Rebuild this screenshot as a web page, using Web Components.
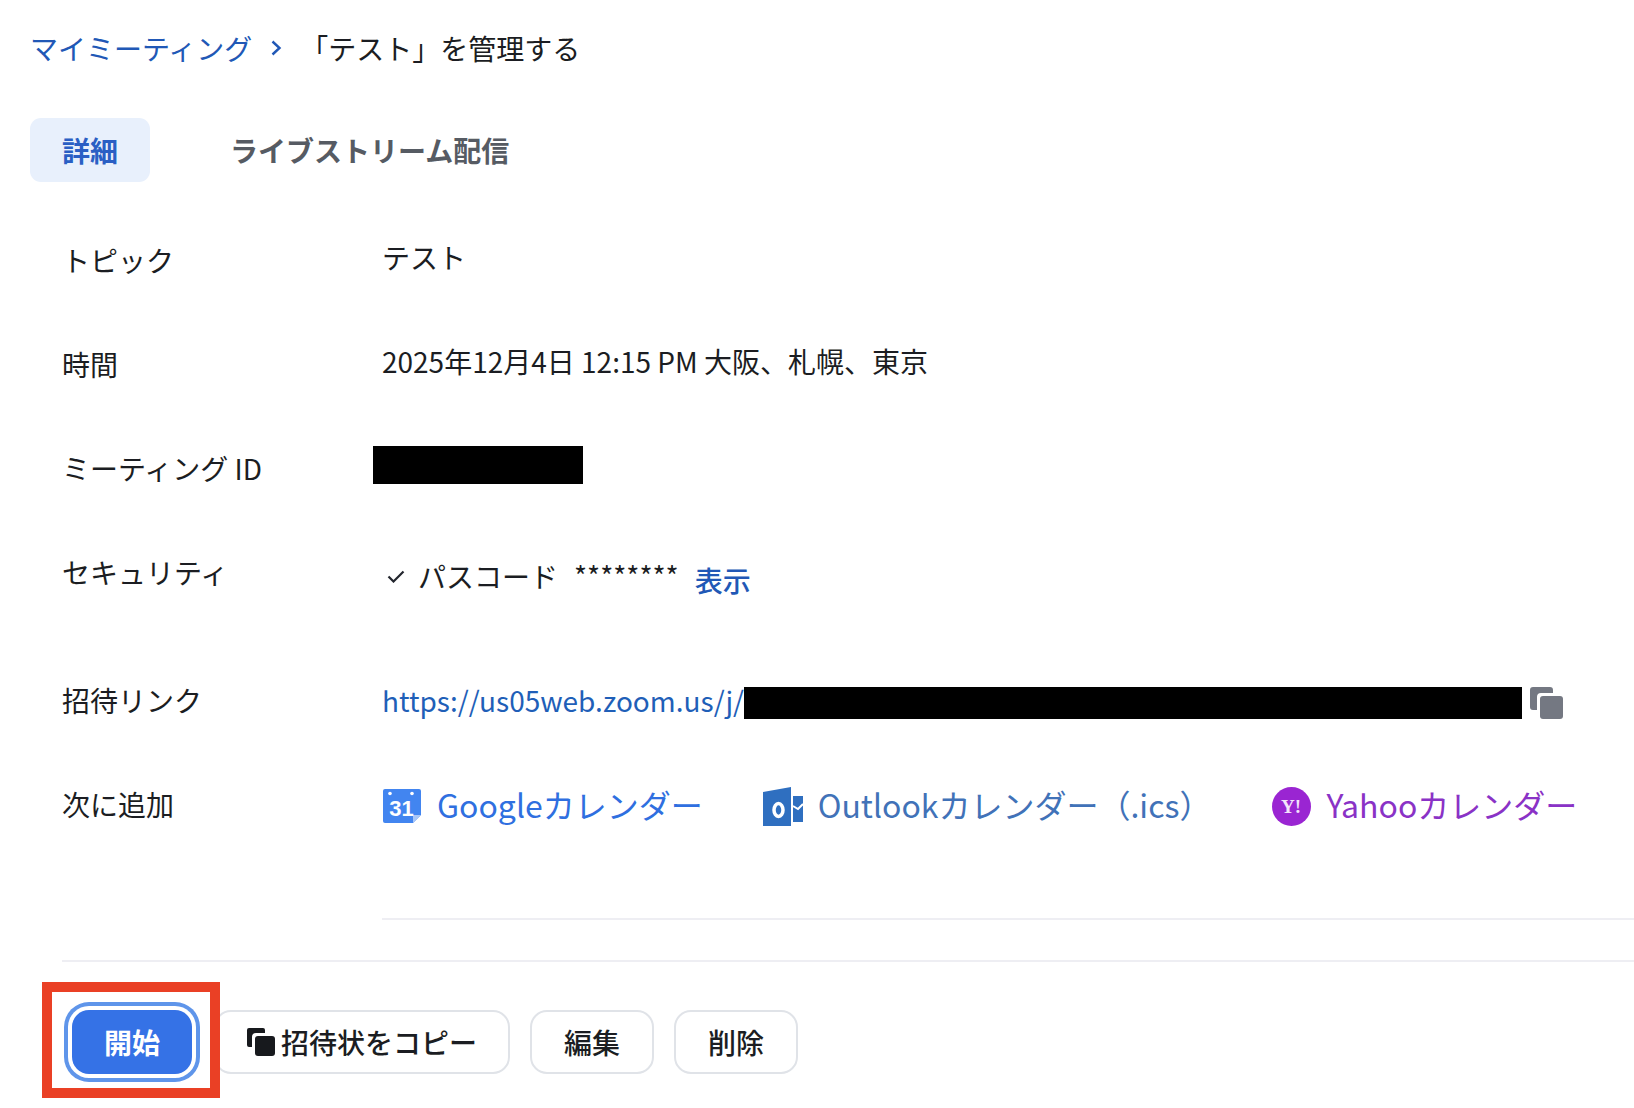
<!DOCTYPE html>
<html lang="ja"><head><meta charset="utf-8"><title>テスト</title>
<style>
html,body{margin:0;background:#fff}
body{font-family:"Noto Sans CJK JP","Noto Sans",sans-serif;font-size:28px;color:#1b1d22;overflow:hidden;height:1108px}
</style></head><body>
<zm-page>
  <zm-breadcrumb slot="crumb" link="マイミーティング" current="「テスト」を管理する"></zm-breadcrumb>
  <zm-tabs slot="tabs"></zm-tabs>
  <zm-row slot="rows" label="トピック"><span style="position:relative;top:-3px">テスト</span></zm-row>
  <zm-row slot="rows" label="時間"><span style="position:relative;top:-3px">2025年12月4日 12:15 PM 大阪、札幌、東京</span></zm-row>
  <zm-row slot="rows" label="ミーティング ID"><zm-redact style="--w:210px;--h:38px;margin:-4px 0 0 -9px"></zm-redact></zm-row>
  <zm-row slot="rows" label="セキュリティ" style="--rh:128px"><zm-passcode></zm-passcode></zm-row>
  <zm-row slot="rows" label="招待リンク"><zm-invite></zm-invite></zm-row>
  <zm-row slot="rows" label="次に追加"><zm-calendars></zm-calendars></zm-row>
  <zm-actions slot="actions"></zm-actions>
</zm-page>
<script>
function def(name, html, init){
  customElements.define(name, class extends HTMLElement{
    constructor(){super();this.attachShadow({mode:'open'}).innerHTML=html;}
    connectedCallback(){ if(init) init(this,this.shadowRoot); }
  });
}
def('zm-page',`<style>
:host{display:block;width:1634px;height:1108px;box-sizing:border-box;padding-top:30px;position:relative}
.rows{margin-top:60px;display:flex;flex-direction:column}
.d1{height:2px;background:#eeeef3;margin:28px 0 0 382px}
.d2{height:2px;background:#eeeef3;margin:40px 0 0 62px}
</style>
<slot name="crumb"></slot><slot name="tabs"></slot>
<div class="rows"><slot name="rows"></slot></div>
<div class="d1"></div><div class="d2"></div>
<slot name="actions"></slot>`);
def('zm-breadcrumb',`<style>
:host{display:flex;align-items:center;height:38px;padding-left:30px;line-height:38px;position:relative;top:-1px}
a{color:#2158b6;text-decoration:none}
svg{margin:0 18px 0 18px;display:block}
</style><a id="l"></a><svg width="12" height="16" viewBox="0 0 12 16"><path d="M2.500 1.500l7 6.500-7 6.500" fill="none" stroke="#2158b6" stroke-width="2.400"/></svg><span id="c"></span>`,
(h,s)=>{s.getElementById('l').textContent=h.getAttribute('link');s.getElementById('c').textContent=h.getAttribute('current');});
def('zm-tabs',`<style>
:host{display:flex;align-items:center;margin:50px 0 0 30px;height:64px}
.t{height:64px;line-height:64px;border-radius:11px}
.a{background:#e8f0fc;color:#2a5fc4;font-weight:700;width:120px;text-align:center;margin-right:80px}
.b{color:#565b63;font-weight:700}
</style><div class="t a">詳細</div><div class="t b">ライブストリーム配信</div>`);
def('zm-row',`<style>
:host{display:grid;grid-template-columns:320px 1fr;height:var(--rh,104px);padding-left:62px;line-height:36px}
.v{display:flex;align-items:flex-start;min-width:0;white-space:nowrap}
</style><div id="l"></div><div class="v"><slot></slot></div>`,
(h,s)=>{s.getElementById('l').textContent=h.getAttribute('label');});
def('zm-redact',`<style>:host{display:inline-block;width:var(--w);height:var(--h);background:#000}</style>`);
def('zm-passcode',`<style>
:host{display:flex;align-items:center;height:36px;position:relative;top:4px}
svg{margin:0 13px 0 5px;display:block}
.s{margin-left:16px;position:relative;top:-1px}
a{color:#2158b6;font-weight:500;margin-left:16px;position:relative;top:4px}
</style><svg width="18" height="14" viewBox="0 0 18 14"><path d="M1.500 7.500l5 5 10-10" fill="none" stroke="#23262e" stroke-width="2.200"/></svg><span>パスコード</span><span class="s">********</span><a>表示</a>`);
def('zm-invite',`<style>
:host{display:flex;align-items:center;height:36px;font-size:28px}
a{color:#1f5fb8}
svg{display:block;margin:6px 0 0 8px}
zm-redact{margin-top:5px}
</style><a>https://us05web.zoom.us/j/</a><zm-redact style="--w:778px;--h:32px"></zm-redact><svg width="34" height="34" viewBox="0 0 34 34"><path d="M3 1h17a3 3 0 0 1 3 3v3H11a4 4 0 0 0-4 4v13H3a3 3 0 0 1-3-3V4a3 3 0 0 1 3-3z" fill="#747882"/><rect x="10" y="10" width="23" height="23" rx="3" fill="#747882"/></svg>`);
def('zm-calendars',`<style>
:host{display:flex;align-items:center;height:40px;font-size:32px;position:relative;top:-2px}
.i{display:flex;align-items:center}
svg{display:block;position:relative;top:2px}
.g{color:#2f6fe0}.g svg{margin:0 16px 0 1px}
.o{color:#4172b8;margin-left:60px}.o svg{margin-right:15px}
.y{color:#8a32c6;margin-left:61px}.y svg{margin-right:15px}
</style>
<div class="i g"><svg width="38" height="34" viewBox="0 0 38 34"><path d="M2 0h34a2 2 0 0 1 2 2v24l-8 8H2a2 2 0 0 1-2-2V2a2 2 0 0 1 2-2z" fill="#4285f0"/><path d="M30 34v-8h8z" fill="#a9c6f7"/><circle cx="7" cy="4.500" r="1.800" fill="#fff"/><circle cx="29" cy="4.500" r="1.800" fill="#fff"/><text x="18.500" y="27" text-anchor="middle" font-family="Liberation Sans,sans-serif" font-size="22" font-weight="700" fill="#fff">31</text></svg>Googleカレンダー</div>
<div class="i o"><svg width="40" height="39" viewBox="0 0 40 39"><path d="M0 5L28 0v39H0z" fill="#2f6fc0"/><path d="M30 9h10v26H30z" fill="#2f6fc0"/><path d="M30 19l5 3 5-5" fill="none" stroke="#fff" stroke-width="2"/><ellipse cx="15.500" cy="23" rx="4.500" ry="6.500" fill="none" stroke="#fff" stroke-width="3.500"/></svg>Outlookカレンダー（.ics）</div>
<div class="i y"><svg width="39" height="39" viewBox="0 0 39 39"><circle cx="19.500" cy="19.500" r="19.500" fill="#9a25d2"/><text x="19" y="26" text-anchor="middle" font-family="Liberation Serif,serif" font-size="19" font-weight="700" fill="#f3e4fb">Y!</text></svg>Yahooカレンダー</div>`);
def('zm-actions',`<style>
:host{display:flex;align-items:flex-start;margin-top:48px;padding-left:72px;position:relative;font-weight:500}
button{font:inherit;height:64px;box-sizing:border-box;border-radius:17px;border:2px solid #e0e3e8;background:#fff;color:#1b1d22;display:flex;align-items:center;justify-content:center;padding:0;white-space:nowrap}
.st{width:120px;background:#3572e6;border:0;color:#fff;font-weight:700;box-shadow:0 0 0 4px #fff,0 0 0 8px #5f95ea;margin-right:22px}
.inv{width:296px;margin-right:20px}
.sm{width:124px;margin-right:20px}
svg{display:block;margin-right:6px}
.frame{position:absolute;left:42px;top:-28px;width:178px;height:116px;box-sizing:border-box;border:10px solid #ea4025;pointer-events:none}
</style>
<button class="st">開始</button>
<button class="inv"><svg width="28" height="28" viewBox="0 0 28 28"><path d="M2 0h14a2 2 0 0 1 2 2v3H9a4 4 0 0 0-4 4v10H2a2 2 0 0 1-2-2V2a2 2 0 0 1 2-2z" fill="#17191d"/><rect x="8" y="8" width="20" height="20" rx="3" fill="#17191d"/></svg>招待状をコピー</button>
<button class="sm">編集</button><button class="sm">削除</button>
<div class="frame"></div>`);
</script>
</body></html>
